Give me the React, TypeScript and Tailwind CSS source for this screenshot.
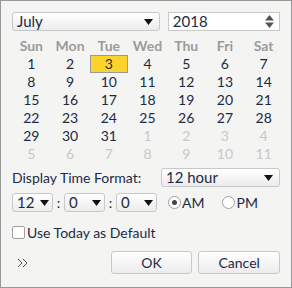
import React from "react";

const Caret = () => (
  <svg width="9" height="6" viewBox="0 0 9 6" className="shrink-0">
    <path d="M0 0 H9 L4.5 6 Z" fill="#111" />
  </svg>
);

const Sel = ({ label, w, pr = "pr-[6px]" }: { label: string; w: string; pr?: string }) => (
  <div
    className={`flex items-center justify-between h-[19px] border border-[#c8c8c8] rounded-[3px] bg-gradient-to-b from-white to-[#ececec] pl-[4px] ${pr} ${w}`}
  >
    <span className="text-[15px] leading-none text-[#1c2a44]">{label}</span>
    <Caret />
  </div>
);

export default function App() {
  const days = ["Sun", "Mon", "Tue", "Wed", "Thu", "Fri", "Sat"];
  const cells: { d: number; cur: boolean }[] = [];
  for (let i = 1; i <= 31; i++) cells.push({ d: i, cur: true });
  for (let i = 1; i <= 11; i++) cells.push({ d: i, cur: false });
  return (
    <div
      className="w-[292px] h-[288px] border border-[#9a9a9a] bg-[#f4f5f3] px-[11px] pt-[11px] text-[#1c2a44]"
      style={{ fontFamily: "Lato, 'Noto Sans', sans-serif" }}
    >
      <div className="flex gap-[8px]">
        <Sel label="July" w="w-[149px]" />
        <div className="flex items-center justify-between h-[19px] w-[113px] border border-[#c8c8c8] bg-white pl-[4px] pr-[5px]">
          <span className="text-[15px] leading-none">2018</span>
          <svg width="9" height="13" viewBox="0 0 9 13">
            <path d="M0 5.5 L4.5 0 L9 5.5 Z M0 7.5 H9 L4.5 13 Z" fill="#555" />
          </svg>
        </div>
      </div>
      <div className="grid grid-cols-7 w-[271px] mt-[6px] text-center">
        {days.map((d) => (
          <div key={d} className="h-[18px] leading-[18px] text-[14px] font-bold text-[#9b9b9b]">
            {d}
          </div>
        ))}
        {cells.map((c, i) => (
          <div key={i} className="h-[18px] flex items-center justify-center">
            {c.cur && c.d === 3 ? (
              <div className="w-[38px] h-[18px] bg-[#fdd22b] border border-[#9a9a9a] leading-[16px] text-[14px]">3</div>
            ) : (
              <span className={`text-[14px] leading-[18px] ${c.cur ? "text-[#1c2a44]" : "text-[#c8c8c8]"}`}>{c.d}</span>
            )}
          </div>
        ))}
      </div>
      <div className="flex items-center justify-between mt-[5px]">
        <span className="text-[14px] leading-none">Display Time Format:</span>
        <Sel label="12 hour" w="w-[119px]" />
      </div>
      <div className="flex items-center mt-[5px]">
        <Sel label="12" w="w-[41px]" pr="pr-[3px]" />
        <span className="w-[11px] text-center text-[14px]">:</span>
        <Sel label="0" w="w-[41px]" pr="pr-[3px]" />
        <span className="w-[11px] text-center text-[14px]">:</span>
        <Sel label="0" w="w-[41px]" pr="pr-[3px]" />
        <div className="flex items-center ml-[11px]">
          <span className="w-[13px] h-[13px] rounded-full border border-[#a0a0a0] bg-white flex items-center justify-center">
            <span className="w-[5px] h-[5px] rounded-full bg-[#444]" />
          </span>
          <span className="text-[14px] ml-[1px]">AM</span>
        </div>
        <div className="flex items-center ml-[18px]">
          <span className="w-[13px] h-[13px] rounded-full border border-[#a0a0a0] bg-white" />
          <span className="text-[14px] ml-[1px]">PM</span>
        </div>
      </div>
      <div className="flex items-center mt-[9px]">
        <span className="w-[13px] h-[13px] rounded-[2px] border border-[#a0a0a0] bg-white" />
        <span className="text-[14px] ml-[2px]">Use Today as Default</span>
      </div>
      <div className="flex items-center mt-[8px]">
        <div className="w-[99px] pl-[5px] flex items-center">
          <svg width="11" height="10" viewBox="0 0 11 10">
            <path d="M1 1 L5 5 L1 9 M6 1 L10 5 L6 9" fill="none" stroke="#555" strokeWidth="1" />
          </svg>
        </div>
        <div className="w-[82px] h-[23px] border border-[#c8c8c8] rounded-[3px] bg-gradient-to-b from-white to-[#ececec] flex items-center justify-center text-[14px]">OK</div>
        <div className="w-[82px] h-[23px] ml-[6px] border border-[#c8c8c8] rounded-[3px] bg-gradient-to-b from-white to-[#ececec] flex items-center justify-center text-[14px]">Cancel</div>
      </div>
    </div>
  );
}
